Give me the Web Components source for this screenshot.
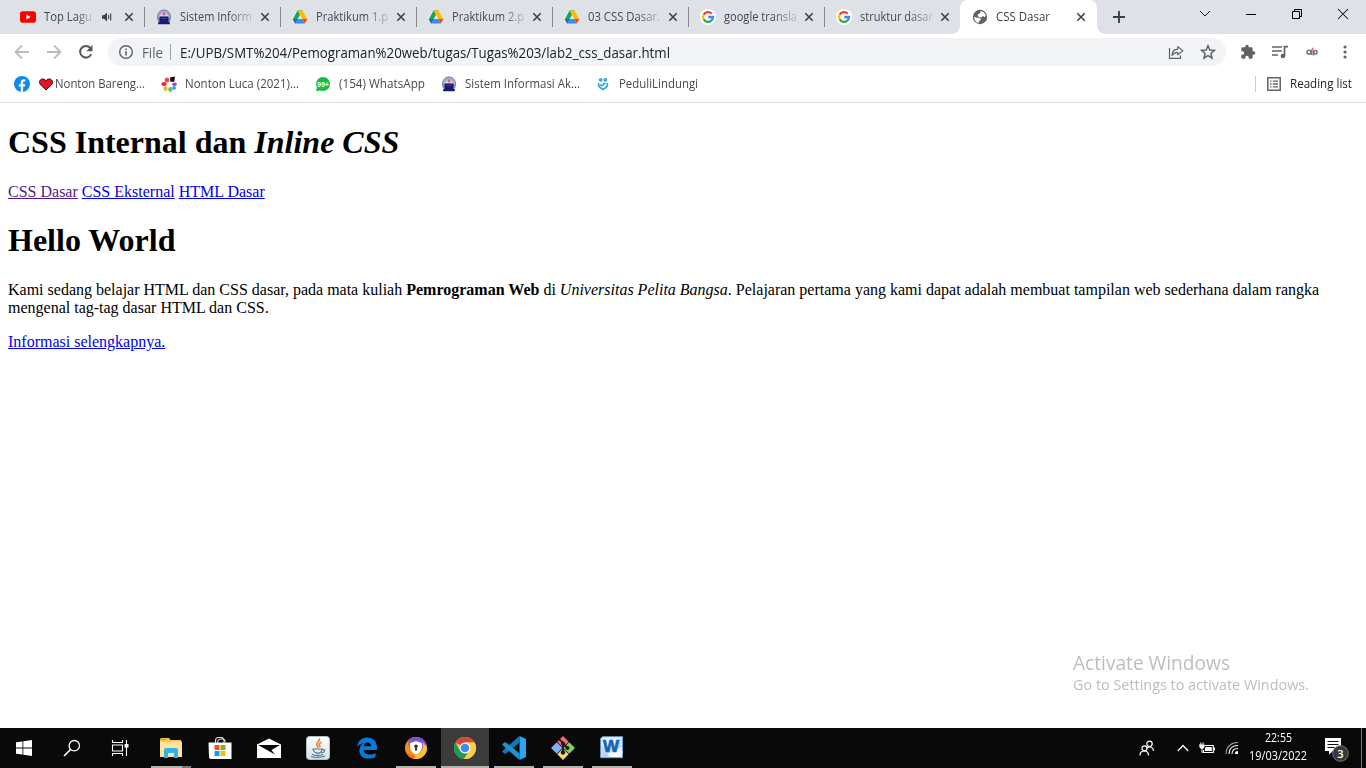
<!DOCTYPE html>
<html lang="id">
<head>
<meta charset="utf-8">
<title>CSS Dasar</title>
<style>
html,body{margin:0;height:100%;overflow:hidden;background:#fff}
</style>
</head>
<body>
<desk-top></desk-top>
<script>
const ICONS = {
youtube:['0 0 16 16','<rect x="0" y="2.3" width="16" height="11.4" rx="2.8" fill="#f00"/><path d="M6.4 5.6v4.8L10.6 8z" fill="#fff"/>'],
sound:['0 0 12 12','<path d="M1 4.3h2L6 1.6v8.8L3 7.7H1z" fill="#3c4043"/><path d="M7.6 4v4M9.7 2.6v6.8" stroke="#3c4043" stroke-width="1.1"/>'],
close:['0 0 10 10','<path d="M1.3 1.3l7.4 7.4M8.7 1.3L1.3 8.7" stroke="#3c4043" stroke-width="1.6"/>'],
upb:['0 0 16 16','<path d="M2.500 12C0 7 2.500 1 8 1s8 6 5.500 11z" fill="#a9aacb" stroke="#7476a6" stroke-width="1"/><path d="M3.500 7.500C4 3.500 12 3.500 12.500 7.500z" fill="#d5d3e6"/><path d="M4 7.500h8l.8 1.500-.5 3.500 1.500.5v2.300H2.200V13l1.500-.5L3.200 9z" fill="#1a1b6b"/><path d="M8 3l1.400 2.200L8 7 6.600 5.200z" fill="#e2606a"/><path d="M5.500 9.500h5" stroke="#4a4c9a" stroke-width=".8"/>'],
drive:['0 0 16 16','<path d="M5.500 1.500h5L8 6z" fill="#188038"/><path d="M5.500 1.500L8 6 3.200 14.400 1 10.200z" fill="#0fa958"/><path d="M10.500 1.500L15.200 10H10.300L5.500 1.500z" fill="#ffba00"/><path d="M3.200 14.400L5.600 10h4.700l2.500 4.400z" fill="#4285f4"/><path d="M.8 10h4.800l-2.400 4.400z" fill="#2164dc"/><path d="M10.300 10h5l-2.500 4.400z" fill="#ea4335"/><path d="M8 6l2.300 4H5.700z" fill="#dee1e6"/>'],
google:['0 0 16 16','<circle cx="8" cy="8" r="8" fill="#fff"/><g fill="none" stroke-width="2.300"><path d="M11.700 4.600A5 5 0 0 0 3.700 5.600" stroke="#ea4335"/><path d="M3.700 5.600a5 5 0 0 0 0 4.800" stroke="#fbbc05"/><path d="M3.700 10.400a5 5 0 0 0 7.600 1.300" stroke="#34a853"/><path d="M8.200 8h4.800a5 5 0 0 1-1.700 3.700" stroke="#4285f4"/></g>'],
globe:['0 0 16 16','<circle cx="8" cy="8" r="7.200" fill="#5f6368"/><path d="M8.400 2.200c2.600-.1 5 2 5.400 4.700L12.500 8 10.800 7 9.600 8.200H7.400L5.800 6.900V5.300l2.200-.8zM2.200 7.700l2.600 1.100h2.600l1.500 1.300-.8 1.700-1.500.7.400 1.400C4.200 13.800 2 11 2.200 7.700z" fill="#fff"/>'],
plus:['0 0 14 14','<path d="M7 1v12M1 7h12" stroke="#3c4043" stroke-width="1.900"/>'],
chevdown:['0 0 12 12','<path d="M1 3l5 5 5-5" fill="none" stroke="#222" stroke-width="1"/>'],
min:['0 0 12 12','<path d="M1 6.500h10" stroke="#000"/>'],
restore:['0 0 12 12','<path d="M1.500 3.500h7v7h-7zM3.500 3.500v-2h7v7h-2" fill="none" stroke="#000"/>'],
winclose:['0 0 12 12','<path d="M1 1l10 10M11 1L1 11" stroke="#111" stroke-width="1.050"/>'],
back:['0 0 16 16','<path d="M15 8H2M8 1.500L1.500 8 8 14.500" fill="none" stroke="#babcbe" stroke-width="1.800"/>'],
fwd:['0 0 16 16','<path d="M1 8h13M8 1.500L14.500 8 8 14.500" fill="none" stroke="#babcbe" stroke-width="1.800"/>'],
reload:['0 0 16 16','<path d="M13.200 10.200A5.800 5.800 0 1 1 12.300 4" fill="none" stroke="#54585d" stroke-width="2"/><path d="M14.500 1v6.200H8.300z" fill="#54585d"/>'],
info:['0 0 16 16','<circle cx="8" cy="8" r="6.300" fill="none" stroke="#5f6368" stroke-width="1.400"/><path d="M8 7.200v4.200M8 4.400v1.600" stroke="#5f6368" stroke-width="1.600"/>'],
share:['0 0 16 16','<path d="M1.500 4v10.300h11V11.500" fill="none" stroke="#5f6368" stroke-width="1.200"/><path d="M4 11.500C4.200 7.300 6.500 5.300 9.800 5.200V2.600l5 4.200-5 4.100V8.400C7 8.400 5.300 9.500 4 11.500z" fill="none" stroke="#5f6368" stroke-width="1.200" stroke-linejoin="round"/>'],
star:['0 0 16 16','<path d="M8 1.700l1.800 4.300 4.700.4-3.600 3.100 1.100 4.600L8 11.600l-4 2.500 1.100-4.600-3.600-3.100 4.700-.4z" fill="none" stroke="#5f6368" stroke-width="1.500"/>'],
puzzle:['0 0 24 24','<path fill="#5f6368" d="M20.500 11H19V7a2 2 0 0 0-2-2h-4V3.500a2.500 2.500 0 0 0-5 0V5H4a2 2 0 0 0-2 2v3.800h1.500a2.700 2.700 0 0 1 0 5.400H2V20c0 1.100.9 2 2 2h3.800v-1.500a2.700 2.700 0 0 1 5.400 0V22H17a2 2 0 0 0 2-2v-4h1.500a2.500 2.500 0 0 0 0-5z"/>'],
media:['0 0 18 16','<path d="M1 3h10M1 7h10M1 11h6" stroke="#5f6368" stroke-width="1.500"/><path d="M17 2.700h-3.500V12" fill="none" stroke="#5f6368" stroke-width="1.700"/><circle cx="11.900" cy="12" r="2.300" fill="#5f6368"/>'],
ext:['0 0 12 10','<circle cx="3" cy="5.200" r="1.900" fill="none" stroke="#77787a" stroke-width="1.600"/><path d="M5.500 2.500v5.500M7.500 3v5.500" stroke="#77787a" stroke-width="1.600"/><circle cx="9.300" cy="5.200" r="1.700" fill="none" stroke="#777" stroke-width="1.600"/><path d="M6.700.7v2" stroke="#f05b4e" stroke-width="1.700"/>'],
dots:['0 0 4 14','<g fill="#5f6368"><circle cx="2" cy="2" r="1.550"/><circle cx="2" cy="7" r="1.550"/><circle cx="2" cy="12" r="1.550"/></g>'],
facebook:['0 0 16 16','<circle cx="8" cy="8" r="8" fill="#0d8af0"/><path d="M6.800 16v-5.500H4.800V8.200h2V6.600c0-2.200 1.200-3.300 3-3.300l1.600.1v2h-1c-1 0-1.300.6-1.300 1.200v1.600h2.200l-.4 2.300H9.100V16z" fill="#fff"/>'],
heart:['0 0 14 13','<path d="M7 12L1.300 6.500C-.6 4 1 1 3.800 1 5.400 1 6.500 1.800 7 3c.5-1.200 1.600-2 3.200-2C13 1 14.600 4 12.700 6.500z" fill="#e81224" stroke="#251010" stroke-width="1"/>'],
petals:['0 0 16 16','<path d="M9 1.500l5-1-.7 5.200-4 .1z" fill="#111"/><ellipse cx="6" cy="4" rx="2.300" ry="2.500" fill="#f04848"/><ellipse cx="3" cy="8" rx="2.700" ry="2" fill="#ee2737"/><ellipse cx="4.500" cy="12.500" rx="2.200" ry="2.500" fill="#ffae2b"/><ellipse cx="9.300" cy="13.500" rx="2.100" ry="2.400" fill="#77bd43"/><ellipse cx="13" cy="12" rx="2" ry="2" fill="#39a6e8"/><ellipse cx="13.500" cy="8.300" rx="2.300" ry="1.700" fill="#9b4bb5"/><circle cx="8.200" cy="8.500" r="2" fill="#fff"/>'],
whatsapp:['0 0 16 16','<circle cx="8" cy="8" r="7" fill="#0fc143"/><path d="M2 11L1 15.200l5-1z" fill="#0fc143"/><text x="8" y="10.700" text-anchor="middle" font-family="Liberation Sans,sans-serif" font-weight="bold" font-size="7" fill="#fff">99+</text>'],
peduli:['0 0 16 16','<g fill="none" stroke="#28a5dd" stroke-width="1.600"><circle cx="5.700" cy="3.800" r="1.100"/><circle cx="10.300" cy="3.800" r="1.100"/><path d="M4 7.200c-1 1.500-.5 3 1 4.300L8 13.500l3-2c1.500-1.300 2-2.800 1-4.300M5.500 8.200c.5 1.800 2 2 2.700.5.500-1.300 1.700-1.600 2.300-.5"/></g>'],
reading:['0 0 14 14','<rect x=".8" y=".8" width="12.400" height="12.400" fill="none" stroke="#5f6368" stroke-width="1.500"/><path d="M3 4.200h1.500M3 7h1.500M3 9.800h1.500M5.800 4.200H11M5.800 7H11M5.800 9.800H11" stroke="#5f6368" stroke-width="1.300"/>'],
win:['0 0 16 16','<path d="M0 2.300L6.500 1.400V7.600H0zM7.300 1.300L16 0v7.600H7.300zM0 8.400h6.500v6.200L0 13.700zM7.300 8.400H16V16l-8.700-1.200z" fill="#fff"/>'],
search:['0 0 18 18','<circle cx="11.300" cy="6.700" r="5.200" fill="none" stroke="#fff" stroke-width="1.300"/><path d="M7.600 10.400L1 17" stroke="#fff" stroke-width="1.500"/>'],
taskview:['0 0 18 16','<path d="M1.500 0v2.500h10V0M1.500 16v-2.500h10V16M1.500 5h10v6h-10zM15.500 0v16" fill="none" stroke="#fff" stroke-width="1.100"/><path d="M13.500 4h4v3.500h-4z" fill="#fff"/>'],
explorer:['0 0 24 22','<path d="M1 2.500Q1 1 2.500 1H10l1.500 2H22v16H1z" fill="#f5c64b"/><path d="M1 4.500h22V20H1z" fill="#ffe39a"/><path d="M5 21v-8q0-2 2-2h10q2 0 2 2v8h-4v-5H9v5z" fill="#33b2e8"/><path d="M2.500 2.500h4" stroke="#4bb3c5"/>'],
store:['0 0 24 24','<path d="M7.500 7V4.500q0-3 3-3h2.500q3 0 3 3V7M9.500 6.500c0-4 7-5 8-1" fill="none" stroke="#ddd" stroke-width="1.100"/><path d="M.5 6.500h23V23H3q-2 0-2-2z" fill="#fff"/><path d="M6.500 9h5v5h-5z" fill="#f05022"/><path d="M12.500 9h5v5h-5z" fill="#7fba00"/><path d="M6.500 15h5v5h-5z" fill="#00a4ef"/><path d="M12.500 15h5v5h-5z" fill="#ffb900"/>'],
mail:['0 0 24 20','<path d="M0 6.500L12 .5l12 6V20H0z" fill="#fff"/><path d="M1 7h22l-8.500 5 3.500 4.500z" fill="#090909"/>'],
java:['0 0 24 24','<defs><linearGradient id="j" x2="0" y2="1"><stop stop-color="#fff"/><stop offset="1" stop-color="#d5e0e5"/></linearGradient></defs><rect x=".5" y=".5" width="23" height="23" rx="3" fill="url(#j)" stroke="#aec0ca"/><path d="M13 2.500c2 3-4 4-2 7l1.500 2.500M15.500 6c-3 2-3 2.500-1 5" fill="none" stroke="#f28439" stroke-width="1.700"/><path d="M7 13h9c0 6-8 5-9 0zM16 13.500c4-.5 3 3-.5 3.500M6 18.500c3 1 8 1 11 0M5 20.500c5 1.300 10 1 14-.5" fill="none" stroke="#4d7996" stroke-width="1.200"/>'],
edge:['0 0 22 22','<path d="M1 10C1.700 4 6 .6 11 .6c6.300 0 10 4.400 10 9.700v2.600H7.600c.2 3 3 4.600 6.200 4.600 2.100 0 4-.5 5.700-1.500v4.100c-2 1-4.500 1.500-6.700 1.500C7 21.600 3.400 18.300 3.400 13.400c0-3.100 1.500-5.700 4.400-7.100C4.800 6.500 2.500 8 1 10zM7.800 9.300h7.300c0-2.500-1.200-3.800-3.600-3.800-2 0-3.300 1.500-3.700 3.800z" fill="#0879d7"/>'],
avast:['0 0 24 24','<circle cx="12" cy="12" r="11" fill="#ff8b18"/><path d="M6 2.800A11 11 0 0 1 23 12L12 15C4 13 3 7 6 2.800z" fill="#7f50dd"/><path d="M23 11A11 11 0 0 1 9 22.500l2-4c6 0 8-4 8-12z" fill="#f8c32d"/><path d="M1 11c1 6 5 9 11 9l-3 2.500C4 21 1 17 1 11z" fill="#f36923"/><path d="M12 5l6 2c.7 5.500-1 9.500-6 11.500C7 16.500 5.300 12.500 6 7z" fill="#fff"/><circle cx="12" cy="10.300" r="1.800" fill="#343640"/><path d="M11.200 11h1.600l.5 3.500h-2.600z" fill="#343640"/>'],
chrome:['0 0 24 24','<circle cx="12" cy="12" r="11" fill="#ffcd46"/><path d="M12 12L2.500 6.400A11 11 0 0 1 21.500 6.500H12z" fill="#dc4437"/><path d="M2.500 6.400A11 11 0 0 0 11 23l5.500-8.400-9.300.2z" fill="#179b5b"/><path d="M12 6.500h9.500A11 11 0 0 1 11 23l6-9z" fill="#ffcd46"/><circle cx="12" cy="12" r="5.500" fill="#fff"/><circle cx="12" cy="12" r="4.300" fill="#4688ef"/>'],
vscode:['0 0 24 24','<path d="M17.500 0L24 3v18l-6.500 3z" fill="#2aa7ef"/><path d="M17.500 0v6.800L4 17.500l-1.300.3L.6 16q-.7-.6 0-1.200z" fill="#1278b8"/><path d="M17.500 24v-6.800L4 6.500l-1.300-.3L.6 8q-.7.600 0 1.200z" fill="#2090d2"/>'],
git:['0 0 24 24','<path d="M12 0l5.700 5.700L12 11.400 6.300 5.700z" fill="#f06d77"/><path d="M18.200 6.300L24 12l-5.800 5.700-5.700-5.700z" fill="#87d160"/><path d="M5.800 6.300l5.700 5.700-5.700 5.700L0 12z" fill="#81aef5"/><path d="M12 12.600l5.700 5.700L12 24l-5.700-5.700z" fill="#f6d775"/><path d="M8 3l4 4v10M12 7.500l4.500 4.500" stroke="#201a1a" stroke-width="1.800" fill="none"/><circle cx="12" cy="7.500" r="2" fill="#201a1a"/><circle cx="16.500" cy="12" r="2" fill="#201a1a"/><circle cx="12" cy="16.500" r="2.200" fill="#201a1a"/>'],
word:['0 0 24 24','<path d="M2.500.7h20v21H.7V2.500z" fill="#e9f2fd" stroke="#6c9bd8"/><path d="M1.500 10Q9 16 20 5v16H1.500z" fill="#c3daf5"/><path d="M18.500 4H22M18.500 7H22M18.500 10H22M3 19h14" stroke="#a8c4ea"/><path d="M7 18l12-5 4 3-3 5H10z" fill="#f8fbff"/><text x="11" y="15.500" text-anchor="middle" textLength="16" lengthAdjust="spacingAndGlyphs" font-family="Liberation Sans,sans-serif" font-weight="bold" font-size="17" fill="#1464b4" stroke="#1464b4" stroke-width=".7">W</text>'],
people:['0 0 16 16','<g fill="none" stroke="#fff" stroke-width="1.200"><circle cx="10.500" cy="3.800" r="2.700"/><path d="M7.800 8C11 5.500 14.500 7.500 14.500 11"/><circle cx="5.500" cy="8.300" r="2.500"/><path d="M1 15.500c0-6 8.500-6 8.500 0"/></g>'],
chevup:['0 0 12 8','<path d="M.8 7L6 1.500 11.200 7" fill="none" stroke="#fff" stroke-width="1.300"/>'],
battery:['0 0 16 12','<path d="M5.500 3.500h8.800v7H4.500V8" fill="none" stroke="#fff" stroke-width="1.100"/><path d="M6.500 5h6.300v4H5.800V7.500zM14.500 5.500H16v3h-1.500zM0 2.500h5.500V5q-.5 1.500-2 1.700V11h-1V6.700Q.7 6.500.5 5zM1.300.5h1V3h-1zM3.600.5h1V3h-1z" fill="#fff"/>'],
wifi:['0 0 14 14','<g fill="none" stroke="#fff" stroke-width="1.100"><path d="M1 13C1 6 6 1.500 13 1.500" opacity=".65"/><path d="M4 13c0-5.500 3.500-8.500 9-8.500M7 13c0-3.500 2.500-5.500 6-5.500"/></g><path d="M9.800 13c0-2 1.200-3 3.200-3v3z" fill="#fff"/>'],
note:['0 0 24 24','<path d="M0 0h16v13H8l-4 3.500V13H0z" fill="#fff"/><path d="M2.500 3.500h11M2.500 6.500h11M2.500 9.500h7" stroke="#111" stroke-width="1.100"/><circle cx="15.500" cy="15.500" r="7.800" fill="#383838" stroke="#777"/><text x="15.500" y="19.500" text-anchor="middle" font-family="Open Sans,sans-serif" font-weight="600" font-size="11" fill="#fff">3</text>']
};
class UiIcon extends HTMLElement{
  connectedCallback(){
    const [vb,art]=ICONS[this.getAttribute('name')];
    const v=vb.split(' '),w=this.getAttribute('w')||v[2],h=this.getAttribute('h')||v[3];
    this.attachShadow({mode:'open'}).innerHTML=`<style>:host{display:block;flex:none;width:${w}px;height:${h}px}svg{display:block}</style><svg width="${w}" height="${h}" viewBox="${vb}">${art}</svg>`;
  }
}
customElements.define('ui-icon',UiIcon);

/* One line of text whose glyphs are condensed or widened to fill the requested width. */
class UiText extends HTMLElement{
  connectedCallback(){
    const w=+this.getAttribute('w');
    const r=this.attachShadow({mode:'open'});
    r.innerHTML=`<style>:host{display:block;flex:none;width:${w}px;white-space:nowrap}span{display:inline-block;transform-origin:0 50%}</style><span><slot></slot></span>`;
    const s=r.querySelector('span');
    s.style.transform=`scaleX(${(w/s.getBoundingClientRect().width).toFixed(4)})`;
  }
}
customElements.define('ui-text',UiText);

class BrowserTab extends HTMLElement{
  connectedCallback(){
    const a=this.hasAttribute('active'),m=this.hasAttribute('muted');
    this.attachShadow({mode:'open'}).innerHTML=`<style>
    :host{display:flex;position:relative;box-sizing:border-box;flex:none;width:${a?137:136}px;height:34px;padding-left:12px;align-items:center;font:12px/16px "Open Sans",sans-serif;color:#45494d}
    .label{width:${m?49:74}px;margin-left:8px;padding-bottom:1px;${a?'':'-webkit-mask-image:linear-gradient(90deg,#000 65%,rgba(0,0,0,.15));'}}
    .snd{margin-left:8px}
    .x{margin-left:${m?11:6}px}
    .sep{position:absolute;right:-1px;top:7px;width:1px;height:20px;background:#85888d}
    :host([active]){background:#fff;border-radius:8px 8px 0 0;color:#3c4043}
    :host([active])::before,:host([active])::after{content:"";position:absolute;bottom:0;width:8px;height:8px}
    :host([active])::before{left:-8px;background:radial-gradient(circle at 0 0,transparent 7.500px,#fff 8px)}
    :host([active])::after{right:-8px;background:radial-gradient(circle at 100% 0,transparent 7.500px,#fff 8px)}
    </style><ui-icon name="${this.getAttribute('icon')}"></ui-icon><div class="label"><ui-text w="${this.getAttribute('w')}">${this.getAttribute('label')}</ui-text></div>${m?'<ui-icon class="snd" name="sound"></ui-icon>':''}<ui-icon class="x" name="close"></ui-icon>${a||this.hasAttribute('last')?'':'<div class="sep"></div>'}`;
  }
}
customElements.define('browser-tab',BrowserTab);

class TabStrip extends HTMLElement{
  connectedCallback(){
    this.attachShadow({mode:'open'}).innerHTML=`<style>
    :host{display:flex;height:34px;background:#dee1e6;padding-left:8px;align-items:center}
    .plus{margin-left:15px}
    .win{display:flex;margin-left:auto;margin-right:17px;gap:34px;height:28px;align-items:center;align-self:flex-start}
    </style>
    <browser-tab icon="youtube" label="Top Lagu" w="48" muted></browser-tab>
    <browser-tab icon="upb" label="Sistem Inform" w="72"></browser-tab>
    <browser-tab icon="drive" label="Praktikum 1.p" w="72"></browser-tab>
    <browser-tab icon="drive" label="Praktikum 2.p" w="72"></browser-tab>
    <browser-tab icon="drive" label="03 CSS Dasar." w="72"></browser-tab>
    <browser-tab icon="google" label="google transla" w="73"></browser-tab>
    <browser-tab icon="google" label="struktur dasar" w="73" last></browser-tab>
    <browser-tab icon="globe" label="CSS Dasar" w="54" active></browser-tab>
    <ui-icon class="plus" name="plus"></ui-icon>
    <div class="win"><ui-icon name="chevdown"></ui-icon><ui-icon name="min"></ui-icon><ui-icon name="restore"></ui-icon><ui-icon name="winclose"></ui-icon></div>`;
  }
}
customElements.define('tab-strip',TabStrip);

class ToolBar extends HTMLElement{
  connectedCallback(){
    this.attachShadow({mode:'open'}).innerHTML=`<style>
    :host{display:flex;height:36px;align-items:center;padding-left:14px;font:13.700px "Open Sans",sans-serif;color:#202124;background:#fff}
    .nav{display:flex;gap:16px;width:94px;flex:none}
    .omni{display:flex;align-items:center;box-sizing:border-box;width:1118px;height:28px;border-radius:14px;background:#f1f3f4;padding:0 10px;flex:none}
    .file{color:#5f6368;margin-left:8px}
    .bar{width:1px;height:16px;background:#9aa0a6;margin:0 9px 0 7px}
    .omni .share{margin-left:auto;margin-right:16px}
    .puz{margin-left:14px}.media{margin-left:15px}.ext{margin-left:17px}.dots{margin-left:25px}
    </style>
    <div class="nav"><ui-icon name="back"></ui-icon><ui-icon name="fwd"></ui-icon><ui-icon name="reload"></ui-icon></div>
    <div class="omni"><ui-icon name="info"></ui-icon><ui-text class="file" w="21">File</ui-text><div class="bar"></div><ui-text w="490">E:/UPB/SMT%204/Pemograman%20web/tugas/Tugas%203/lab2_css_dasar.html</ui-text><ui-icon class="share" name="share"></ui-icon><ui-icon name="star"></ui-icon></div>
    <ui-icon class="puz" name="puzzle" w="16" h="16"></ui-icon><ui-icon class="media" name="media"></ui-icon><ui-icon class="ext" name="ext"></ui-icon><ui-icon class="dots" name="dots"></ui-icon>`;
  }
}
customElements.define('tool-bar',ToolBar);

class BookmarkItem extends HTMLElement{
  connectedCallback(){
    this.attachShadow({mode:'open'}).innerHTML=`<style>:host{display:flex;align-items:center;flex:none;gap:var(--gap,8px)}::slotted(*){padding-bottom:1px}</style><ui-icon name="${this.getAttribute('icon')}"></ui-icon><slot></slot>`;
  }
}
customElements.define('bookmark-item',BookmarkItem);

class BookmarkBar extends HTMLElement{
  connectedCallback(){
    this.attachShadow({mode:'open'}).innerHTML=`<style>
    :host{display:flex;box-sizing:border-box;height:33px;padding:0 14px 4px;align-items:center;border-bottom:1px solid #dadce0;background:#fff;font:12px/16px "Open Sans",sans-serif;color:#45494d}
    .rl{margin-left:auto;border-left:1px solid #c8cacd;padding-left:11px;height:16px;color:#202124;--gap:9px}
    </style>
    <bookmark-item icon="facebook" style="--gap:0"></bookmark-item>
    <bookmark-item icon="heart" style="--gap:2px;margin-left:9px"><ui-text w="90">Nonton Bareng...</ui-text></bookmark-item>
    <bookmark-item icon="petals" style="margin-left:16px"><ui-text w="114">Nonton Luca (2021)...</ui-text></bookmark-item>
    <bookmark-item icon="whatsapp" style="margin-left:16px"><ui-text w="86">(154) WhatsApp</ui-text></bookmark-item>
    <bookmark-item icon="upb" style="margin-left:16px"><ui-text w="115">Sistem Informasi Ak...</ui-text></bookmark-item>
    <bookmark-item icon="peduli" style="margin-left:15px"><ui-text w="79">PeduliLindungi</ui-text></bookmark-item>
    <bookmark-item icon="reading" class="rl"><ui-text w="62">Reading list</ui-text></bookmark-item>`;
  }
}
customElements.define('bookmark-bar',BookmarkBar);

class WebPage extends HTMLElement{
  connectedCallback(){
    this.attachShadow({mode:'open'}).innerHTML=`<style>
    :host{display:block;position:relative;flex:1;box-sizing:border-box;padding:0 8px;overflow:hidden;background:#fff;color:#000;font:16px "Liberation Serif",serif}
    h1{font-size:32px;line-height:37px;margin:21.440px 0}
    nav,p{line-height:18px}p{margin:16px 0}
    a{color:#0000ee;text-decoration:underline}.seen{color:#551a8b}
    .wm{position:absolute;left:1073px;top:547px;font-family:"Open Sans",sans-serif;color:#bdbdbd}
    .big{font-size:19.500px;line-height:25px}.small{font-size:14.500px;line-height:20px}
    </style>
    <h1>CSS Internal dan <i>Inline CSS</i></h1>
    <nav><a class="seen">CSS Dasar</a> <a>CSS Eksternal</a> <a>HTML Dasar</a></nav>
    <h1>Hello World</h1>
    <p>Kami sedang belajar HTML dan CSS dasar, pada mata kuliah <b>Pemrograman Web</b> di <i>Universitas Pelita Bangsa</i>. Pelajaran pertama yang kami dapat adalah membuat tampilan web sederhana dalam rangka mengenal tag-tag dasar HTML dan CSS.</p>
    <p><a>Informasi selengkapnya.</a></p>
    <div class="wm"><ui-text class="big" w="157">Activate Windows</ui-text><ui-text class="small" w="236">Go to Settings to activate Windows.</ui-text></div>`;
  }
}
customElements.define('web-page',WebPage);

class TaskButton extends HTMLElement{
  connectedCallback(){
    this.attachShadow({mode:'open'}).innerHTML=`<style>
    :host{display:grid;place-items:center;position:relative;flex:none;width:48px;height:40px}
    :host([run])::after{content:"";position:absolute;bottom:0;left:4px;right:4px;height:2px;background:#b3b4a9}
    :host([current]){background:#3b3b3b}
    :host([current])::after{left:0;right:0}
    :host([multi])::after{background:linear-gradient(90deg,#b3b4a9 31px,#777 31px)}
    </style><ui-icon name="${this.getAttribute('icon')}"></ui-icon>`;
  }
}
customElements.define('task-button',TaskButton);

class TaskBar extends HTMLElement{
  connectedCallback(){
    this.attachShadow({mode:'open'}).innerHTML=`<style>
    :host{display:flex;height:40px;background:#090909;color:#fff;font:12px/18px "Open Sans",sans-serif}
    .sys{display:flex;width:147px}.apps{display:flex;gap:1px}
    .tray{display:flex;margin-left:auto;align-items:center}
    .clock{display:flex;flex-direction:column;align-items:center;width:58px;margin-left:10px;padding-bottom:2px}
    .desk{width:4px;height:40px;border-left:1px solid #777}
    </style>
    <div class="sys"><task-button icon="win"></task-button><task-button icon="search"></task-button><task-button icon="taskview"></task-button></div>
    <div class="apps"><task-button icon="explorer" run multi></task-button><task-button icon="store"></task-button><task-button icon="mail"></task-button><task-button icon="java"></task-button><task-button icon="edge"></task-button><task-button icon="avast" run></task-button><task-button icon="chrome" run current></task-button><task-button icon="vscode" run></task-button><task-button icon="git" run></task-button><task-button icon="word" run></task-button></div>
    <div class="tray"><ui-icon name="people"></ui-icon><ui-icon name="chevup" style="margin-left:22px"></ui-icon><ui-icon name="battery" style="margin-left:10px"></ui-icon><ui-icon name="wifi" style="margin-left:10px"></ui-icon>
    <div class="clock"><ui-text w="27">22:55</ui-text><ui-text w="58">19/03/2022</ui-text></div>
    <ui-icon name="note" style="margin:4px 12px 0 18px"></ui-icon><div class="desk"></div></div>`;
  }
}
customElements.define('task-bar',TaskBar);

class DeskTop extends HTMLElement{
  connectedCallback(){
    this.attachShadow({mode:'open'}).innerHTML=`<style>:host{display:flex;flex-direction:column;width:1366px;height:768px;overflow:hidden}</style><tab-strip></tab-strip><tool-bar></tool-bar><bookmark-bar></bookmark-bar><web-page></web-page><task-bar></task-bar>`;
  }
}
customElements.define('desk-top',DeskTop);
</script>
</body>
</html>
